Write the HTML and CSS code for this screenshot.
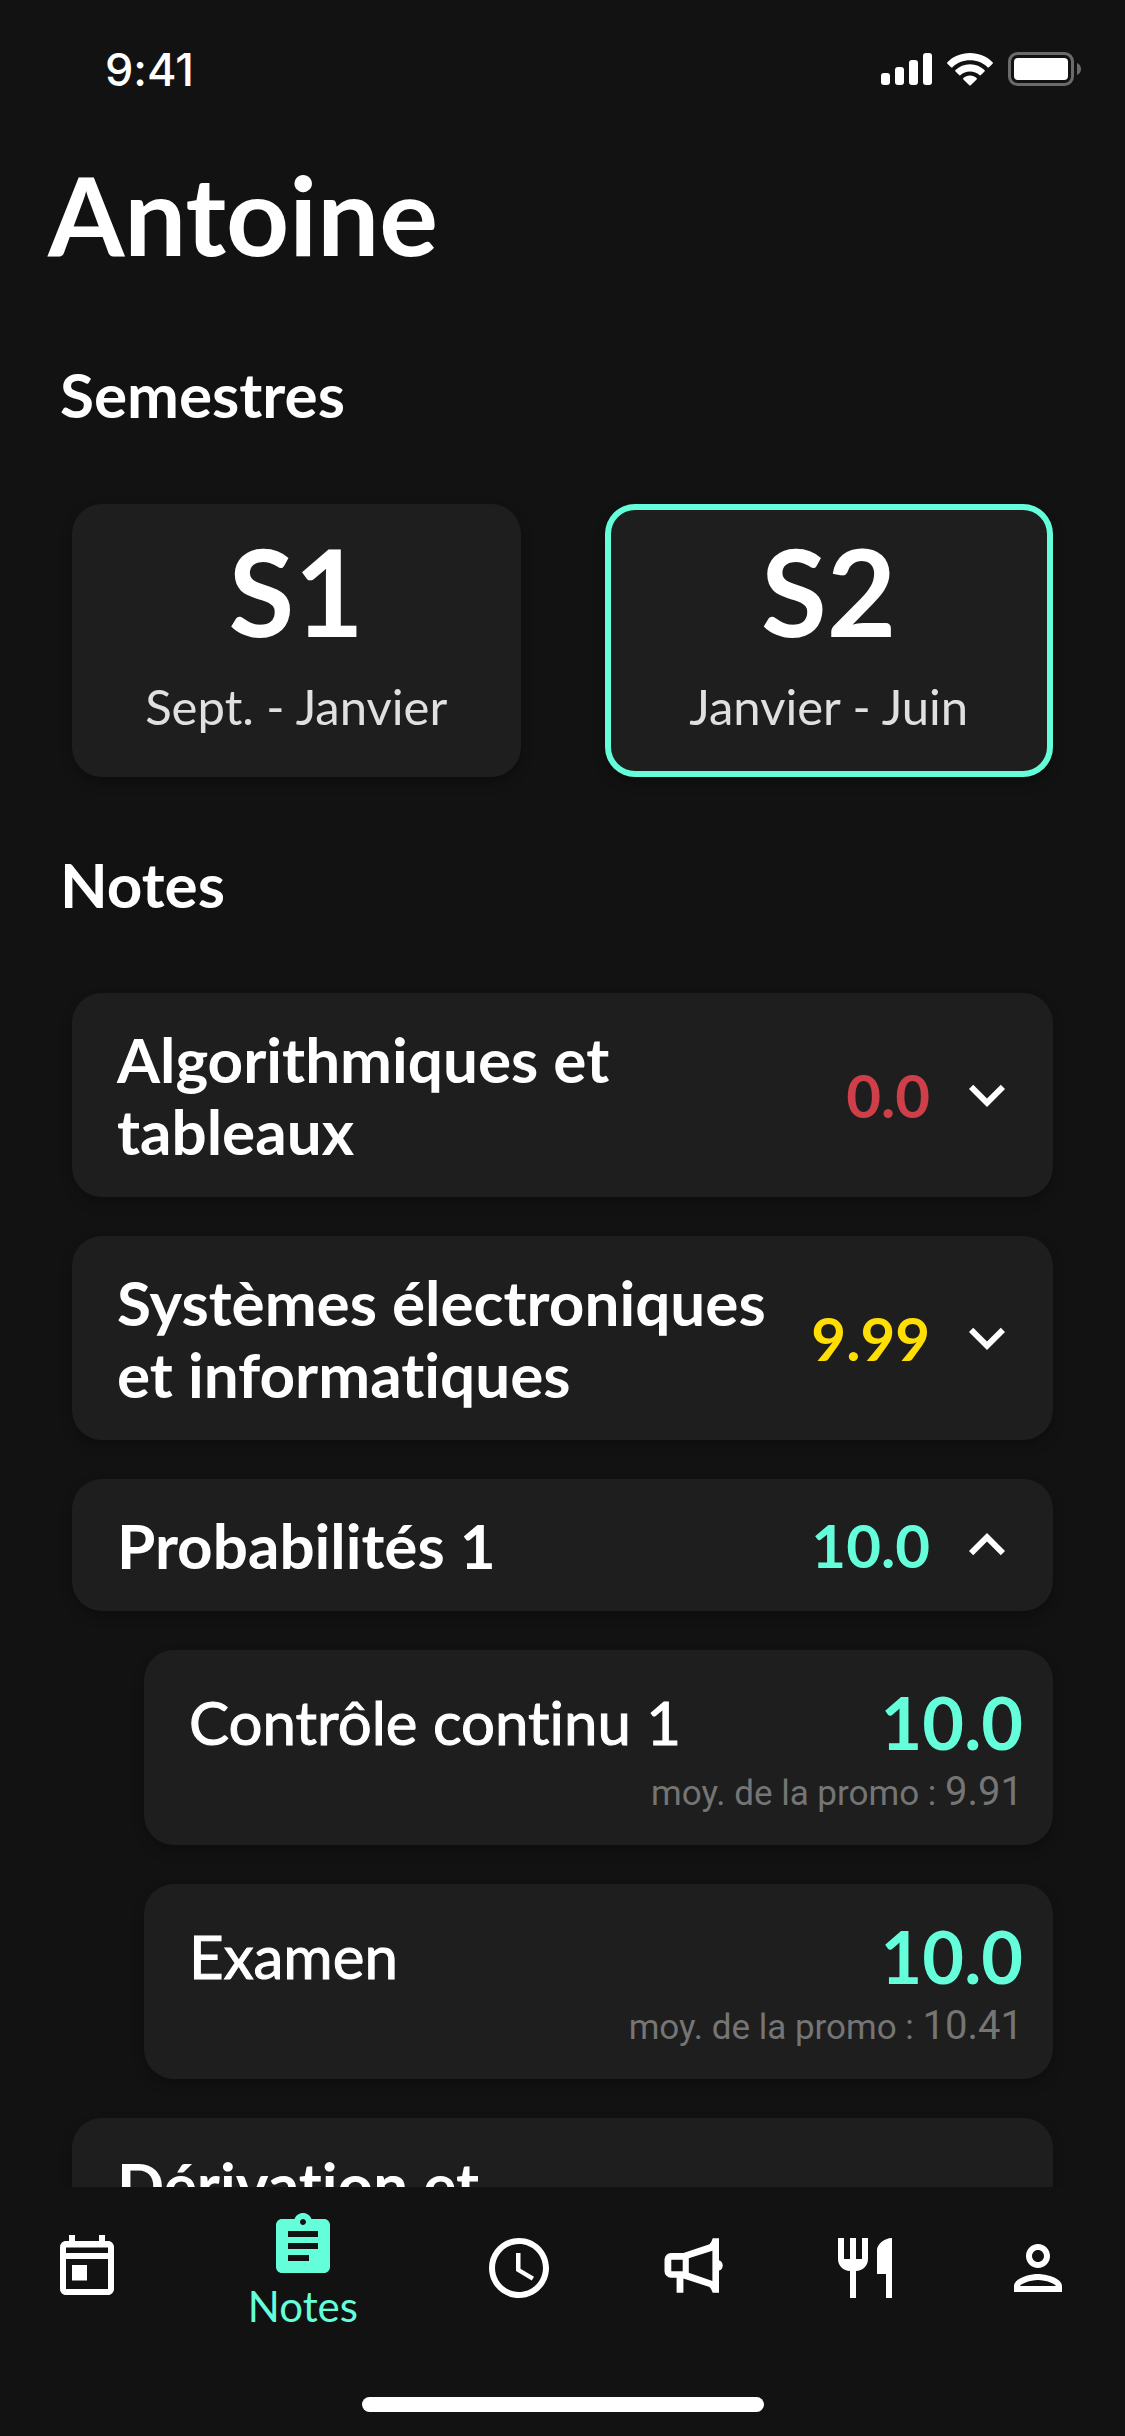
FILE: index.html
```html
<!DOCTYPE html>
<html lang="fr">
<head>
  <meta charset="utf-8">
  <meta name="viewport" content="width=device-width, initial-scale=1">
  <title>Notes</title>
  <link rel="stylesheet" href="styles.css">
</head>
<body>
  <div class="app">
    <header class="status-bar">
      <time class="status-time">9:41</time>
      <div class="status-icons">
        <svg class="signal" viewBox="0 0 51 32" aria-hidden="true">
          <rect x="0" y="20" width="9" height="12" rx="3"/>
          <rect x="14" y="14" width="9" height="18" rx="3"/>
          <rect x="28" y="7" width="9" height="25" rx="3"/>
          <rect x="42" y="0" width="9" height="32" rx="3"/>
        </svg>
        <svg class="wifi" viewBox="0 0 46 33" aria-hidden="true">
          <path d="M23 0C32 0 40 3.500 45.600 9.200Q46.300 10 45.600 10.700L42 14.200Q41.200 14.900 40.500 14.200C36 9.900 29.800 7.300 23 7.300S10 9.900 5.500 14.200Q4.800 14.900 4 14.200L.4 10.700Q-.3 10 .4 9.200C6 3.500 14 0 23 0Z"/>
          <path d="M23 11.300C28.700 11.300 33.800 13.500 37.500 17.100Q38.200 17.900 37.500 18.600L33.900 22.100Q33.200 22.800 32.400 22.100C30 19.900 26.700 18.500 23 18.500S16 19.900 13.600 22.100Q12.800 22.800 12.100 22.100L8.500 18.600Q7.800 17.900 8.500 17.100C12.200 13.500 17.300 11.300 23 11.300Z"/>
          <path d="M23 22.600C25.600 22.600 27.900 23.500 29.600 25Q30.300 25.700 29.600 26.500L23.700 32.200Q23 32.900 22.300 32.200L16.400 26.500Q15.700 25.700 16.400 25C18.100 23.500 20.400 22.600 23 22.600Z"/>
        </svg>
        <svg class="battery" viewBox="0 0 73 34" aria-hidden="true">
          <rect x="1.500" y="1.500" width="63" height="31" rx="8" fill="none" stroke="#6b6b6b" stroke-width="3"/>
          <rect x="6" y="6" width="54" height="22" rx="4"/>
          <path d="M69 11C71.500 12 73 14.300 73 17S71.500 22 69 23Z" fill="#6b6b6b"/>
        </svg>
      </div>
    </header>

    <main class="content">
      <h1 class="user-name">Antoine</h1>

      <section>
        <h2 class="section-title">Semestres</h2>
        <div class="semesters">
          <button class="card semester" type="button">
            <span class="semester-name">S1</span>
            <span class="semester-period">Sept. - Janvier</span>
          </button>
          <button class="card semester selected" type="button" aria-pressed="true">
            <span class="semester-name">S2</span>
            <span class="semester-period">Janvier - Juin</span>
          </button>
        </div>
      </section>

      <section>
        <h2 class="section-title">Notes</h2>
        <div class="grades">
          <button class="card subject" type="button" aria-expanded="false">
            <span class="subject-name">Algorithmiques et tableaux</span>
            <span class="subject-grade bad">0.0</span>
            <svg class="icon" viewBox="0 0 24 24" aria-hidden="true"><path d="M7.410 8.590L12 13.170L16.590 8.590L18 10L12 16L6 10Z"/></svg>
          </button>
          <button class="card subject" type="button" aria-expanded="false">
            <span class="subject-name">Systèmes électroniques et informatiques</span>
            <span class="subject-grade medium">9.99</span>
            <svg class="icon" viewBox="0 0 24 24" aria-hidden="true"><path d="M7.410 8.590L12 13.170L16.590 8.590L18 10L12 16L6 10Z"/></svg>
          </button>
          <button class="card subject" type="button" aria-expanded="true">
            <span class="subject-name">Probabilités 1</span>
            <span class="subject-grade good">10.0</span>
            <svg class="icon" viewBox="0 0 24 24" aria-hidden="true"><path d="M7.410 15.410L12 10.830L16.590 15.410L18 14L12 8L6 14Z"/></svg>
          </button>
          <article class="card exam">
            <div class="exam-main">
              <h3 class="exam-name">Contrôle continu 1</h3>
              <span class="exam-grade good">10.0</span>
            </div>
            <p class="exam-average">moy. de la promo : <span class="average-value">9.91</span></p>
          </article>
          <article class="card exam">
            <div class="exam-main">
              <h3 class="exam-name">Examen</h3>
              <span class="exam-grade good">10.0</span>
            </div>
            <p class="exam-average">moy. de la promo : <span class="average-value">10.41</span></p>
          </article>
          <button class="card subject" type="button" aria-expanded="false">
            <span class="subject-name">Dérivation et</span>
          </button>
        </div>
      </section>
    </main>

    <footer class="bottom">
      <nav class="tabs">
        <a class="tab" href="#agenda" aria-label="Agenda">
          <svg class="icon" viewBox="0 0 24 24" aria-hidden="true"><path d="M19 3h-1V1h-2v2H8V1H6v2H5c-1.100 0-2 .9-2 2v14c0 1.100.9 2 2 2h14c1.100 0 2-.9 2-2V5c0-1.100-.9-2-2-2zm0 16H5V9h14v10zm0-12H5V5.200h14V7zM7 11h5v5.200H7z"/></svg>
        </a>
        <a class="tab active" href="#notes" aria-current="page">
          <svg class="icon" viewBox="0 0 24 24" aria-hidden="true"><path d="M19 3h-4.180C14.400 1.840 13.300 1 12 1c-1.300 0-2.400.84-2.820 2H5c-1.100 0-2 .9-2 2v14c0 1.100.9 2 2 2h14c1.100 0 2-.9 2-2V5c0-1.100-.9-2-2-2zm-7 0c.55 0 1 .45 1 1s-.45 1-1 1-1-.45-1-1 .45-1 1-1zm2 14H7v-2h7v2zm3-4H7v-2h10v2zm0-4H7V7h10v2z"/></svg>
          <span class="tab-label">Notes</span>
        </a>
        <a class="tab" href="#horaires" aria-label="Horaires">
          <svg class="icon" viewBox="0 0 24 24" aria-hidden="true"><path d="M12 2C6.470 2 2 6.480 2 12s4.470 10 10 10 10-4.480 10-10S17.520 2 12 2zM12 20c-4.420 0-8-3.580-8-8s3.580-8 8-8 8 3.580 8 8-3.580 8-8 8zm.5-13H11v6l5.250 3.150.75-1.230-4.500-2.670z"/></svg>
        </a>
        <a class="tab" href="#annonces" aria-label="Annonces">
          <svg class="icon" viewBox="0 0 72 72" aria-hidden="true"><path fill-rule="evenodd" d="M15 21H27.400L53.500 12.300Q55.500 10.500 56.700 6.300H63V28.200A5.500 5.500 0 0 1 63 38.600V60.700H56.700Q55.500 56.800 53.500 55L27.400 46.500V60.700H20.600V45.700H15A6.500 6.500 0 0 1 8.500 39.200V27.500A6.500 6.500 0 0 1 15 21ZM15.300 27.700V39.300H26.700V27.700ZM32.800 26.300V40.700L56.400 49V18.700Z"/></svg>
        </a>
        <a class="tab" href="#restaurant" aria-label="Restaurant">
          <svg class="icon" viewBox="0 0 24 24" aria-hidden="true"><path d="M11 9H9V2H7v7H5V2H3v7c0 2.200 1.800 4 4 4v9h2v-9c2.200 0 4-1.800 4-4V2h-2v7zm5-3v8h3v8h2V2c-2.760 0-5 2.240-5 4z"/></svg>
        </a>
        <a class="tab" href="#profil" aria-label="Profil">
          <svg class="icon" viewBox="0 0 24 24" aria-hidden="true"><path d="M12 6c1.100 0 2 .9 2 2s-.9 2-2 2-2-.9-2-2 .9-2 2-2m0 10c2.700 0 5.800 1.290 6 2H6c.23-.72 3.310-2 6-2m0-12C9.790 4 8 5.790 8 8s1.790 4 4 4 4-1.790 4-4-1.790-4-4-4zm0 10c-2.670 0-8 1.340-8 4v2h16v-2c0-2.660-5.330-4-8-4z"/></svg>
        </a>
      </nav>
      <div class="home-indicator"></div>
    </footer>
  </div>
</body>
</html>
```

FILE: styles.css
```css
:root {
  --background: #121212;
  --surface: #1e1e1e;
  --accent: #64ffda;
  --text: #ffffff;
  --muted: #757575;
}

* {
  box-sizing: border-box;
}

body,
h1,
h2,
h3,
p {
  margin: 0;
}

body {
  background: var(--background);
  color: var(--text);
  font-family: Lato, "Open Sans", sans-serif;
  font-variant-ligatures: none;
}

button {
  border: 0;
  color: inherit;
  font: inherit;
  font-variant-ligatures: none;
}

svg {
  display: block;
  flex: none;
  fill: currentColor;
}

.app {
  display: flex;
  flex-direction: column;
  height: 100vh;
}

/* Status bar */

.status-bar {
  display: flex;
  flex: none;
  justify-content: space-between;
  align-items: center;
  height: 138px;
  padding: 0 44px 0 105px;
}

.status-time {
  font-family: Inter, sans-serif;
  font-size: 45px;
  font-weight: 500;
}

.status-icons {
  display: flex;
  align-items: center;
  gap: 15px;
}

.signal {
  width: 51px;
  height: 32px;
}

.wifi {
  width: 46px;
  height: 33px;
}

.battery {
  width: 73px;
  height: 34px;
}

/* Scrolling content */

.content {
  flex: 1;
  min-height: 0;
  overflow: hidden auto;
  scrollbar-width: none;
}

.user-name {
  padding: 9px 48px 0;
  font-size: 110px;
  font-weight: 700;
  line-height: 132px;
}

.section-title {
  padding: 0 60px;
  font-size: 62px;
  font-weight: 700;
  line-height: 72px;
}

.user-name + section {
  padding-top: 79px;
}

.card {
  background: var(--surface);
  border-radius: 30px;
  box-shadow: 0 6px 12px rgba(0, 0, 0, 0.25);
}

.semesters {
  display: flex;
  gap: 84px;
  padding: 74px 72px 71px;
}

.semester {
  display: flex;
  flex: 1;
  flex-direction: column;
  align-items: center;
  gap: 6px;
  padding: 15px 0 33px;
}

.selected {
  box-shadow: inset 0 0 0 6px var(--accent), 0 6px 12px rgba(0, 0, 0, 0.25);
}

.semester-name {
  font-size: 120px;
  font-weight: 700;
  line-height: 144px;
}

.semester-period {
  color: #e0e0e0;
  font-size: 49px;
  line-height: 75px;
}

.grades {
  display: flex;
  flex-direction: column;
  gap: 39px;
  padding: 73px 72px 39px;
}

.subject {
  display: flex;
  align-items: center;
  gap: 21px;
  padding: 30px 30px 30px 45px;
  text-align: left;
}

.subject-name {
  flex: 1;
  font-size: 62px;
  font-weight: 700;
  line-height: 72px;
}

.subject-grade {
  font-size: 60px;
  font-weight: 700;
  line-height: 72px;
}

.good {
  color: var(--accent);
}

.medium {
  color: #ffde03;
}

.bad {
  color: #cf3f4a;
}

.exam {
  display: flex;
  flex-direction: column;
  gap: 3px;
  margin-left: 72px;
  padding: 30px 30px 26px 45px;
}

.exam-main {
  display: flex;
  justify-content: space-between;
  align-items: center;
}

/* Lato has no medium weight, so a thin outline thickens the regular one */
.exam-name {
  font-size: 60px;
  font-weight: 400;
  line-height: 84px;
  -webkit-text-stroke: 1px currentColor;
}

.exam-grade {
  font-size: 72px;
  font-weight: 700;
  line-height: 84px;
}

.exam-average {
  color: var(--muted);
  font-family: Roboto, sans-serif;
  font-size: 35px;
  line-height: 50px;
  text-align: right;
}

.average-value {
  font-size: 40px;
}

.icon {
  width: 72px;
  height: 72px;
}

/* Bottom navigation */

.bottom {
  display: flex;
  flex: none;
  flex-direction: column;
  align-items: center;
  gap: 48px;
  padding-bottom: 24px;
}

.tabs {
  display: flex;
  width: 100%;
  height: 162px;
}

.tab {
  display: flex;
  flex: 2;
  flex-direction: column;
  justify-content: center;
  align-items: center;
  color: inherit;
  text-decoration: none;
}

.active {
  flex: 3;
  padding-top: 4px;
  color: var(--accent);
}

.tab-label {
  font-size: 42px;
  line-height: 48px;
}

.home-indicator {
  width: 402px;
  height: 15px;
  background: var(--text);
  border-radius: 8px;
}
```
